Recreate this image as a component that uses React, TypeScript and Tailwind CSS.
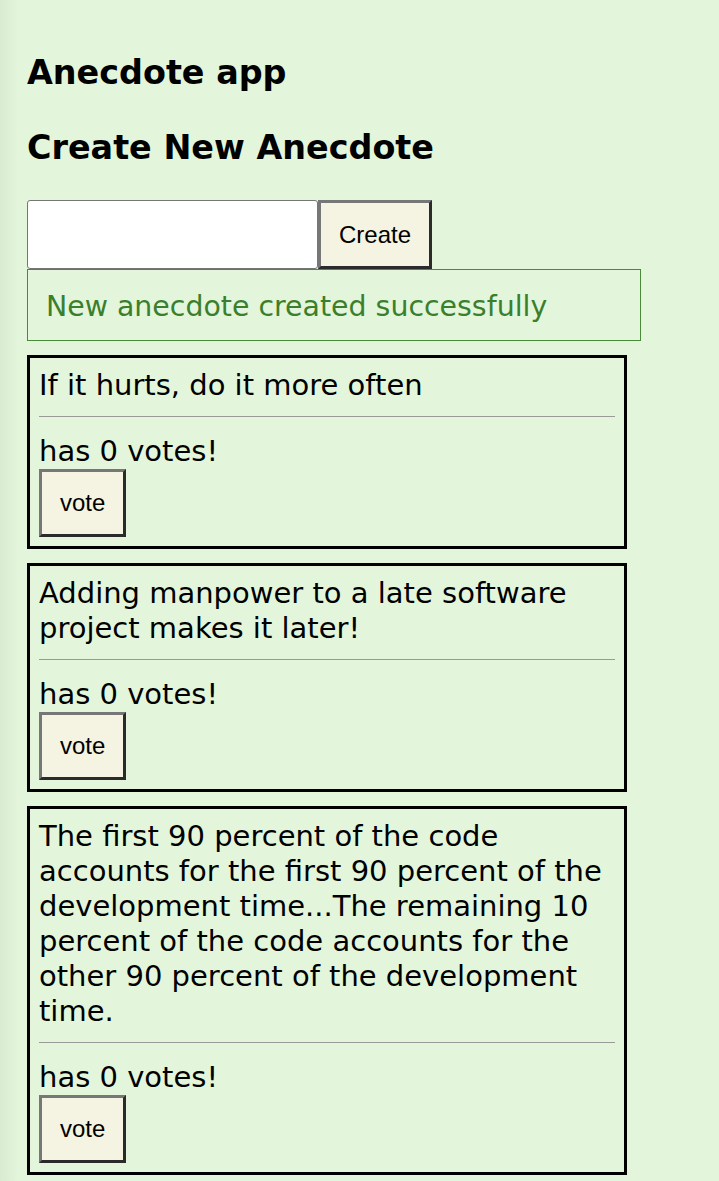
import { useState } from 'react';

interface Anecdote {
  id: number;
  content: string;
  votes: number;
}

const initialAnecdotes: Anecdote[] = [
  { id: 1, content: 'If it hurts, do it more often', votes: 0 },
  { id: 2, content: 'Adding manpower to a late software project makes it later!', votes: 0 },
  {
    id: 3,
    content:
      'The first 90 percent of the code accounts for the first 90 percent of the development time...The remaining 10 percent of the code accounts for the other 90 percent of the development time.',
    votes: 0,
  },
];

const buttonClass =
  "px-[18px] bg-[#f5f3e1] border-[3px] border-t-[#777777] border-l-[#777777] border-b-[#2b2b2b] border-r-[#2b2b2b] text-[24px] text-black font-['Liberation_Sans',Arial,sans-serif]";

export default function App() {
  const [anecdotes, setAnecdotes] = useState(initialAnecdotes);
  const [text, setText] = useState('');

  const vote = (id: number) => {
    setAnecdotes(anecdotes.map((a) => (a.id === id ? { ...a, votes: a.votes + 1 } : a)));
  };

  const create = (e: React.FormEvent) => {
    e.preventDefault();
    if (!text) return;
    setAnecdotes([...anecdotes, { id: Date.now(), content: text, votes: 0 }]);
    setText('');
  };

  return (
    <div className="min-h-screen bg-[linear-gradient(to_right,#d9ebd1,#e3f6dc_18px)] pl-[27px] pt-[53px] pb-2 text-black font-['DejaVu_Sans',Verdana,sans-serif]">
      <h1 className="text-[33.4px] leading-[40px] font-bold">Anecdote app</h1>
      <h2 className="mt-[35px] text-[33.4px] leading-[40px] font-bold">Create New Anecdote</h2>

      <form onSubmit={create} className="mt-[32px] flex">
        <input
          value={text}
          onChange={(e) => setText(e.target.value)}
          className="w-[291px] h-[69px] bg-white border border-[#767676] rounded-[3px] px-2 text-[24px] outline-none"
        />
        <button type="submit" className={`${buttonClass} h-[69px]`}>
          Create
        </button>
      </form>

      <div className="w-[614px] border border-[#4a8a3a] pl-[18px] pt-[19px] pb-[16px] text-[28.4px] leading-[35px] text-[#3b7f2c]">
        New anecdote created successfully
      </div>

      <div className="mt-[14px] flex flex-col gap-[14px]">
        {anecdotes.map((a) => (
          <div key={a.id} className="w-[600px] border-[3px] border-black pt-[10px] px-[9px] pb-[9px]">
            <div className="text-[29px] leading-[35px]">{a.content}</div>
            <hr className="mt-[13px] mb-[17px] border-0 h-px bg-[#9a9a9a]" />
            <div className="text-[29px] leading-[35px]">has {a.votes} votes!</div>
            <button onClick={() => vote(a.id)} className={`${buttonClass} h-[68px]`}>
              vote
            </button>
          </div>
        ))}
      </div>
    </div>
  );
}
